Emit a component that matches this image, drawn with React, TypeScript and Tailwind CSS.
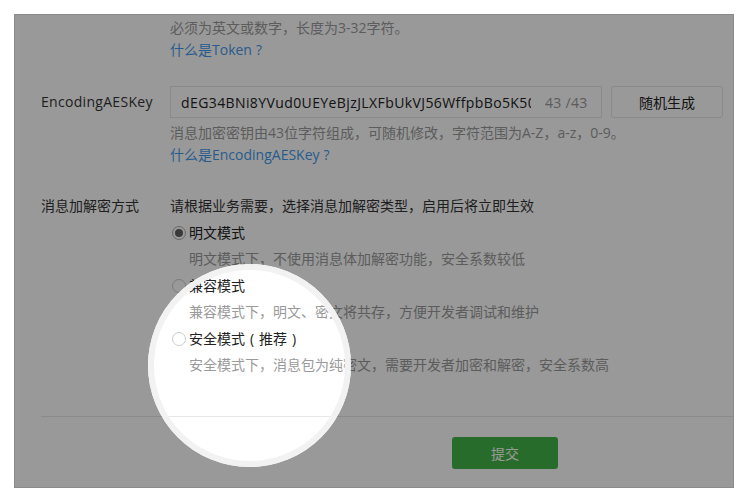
import React from 'react';

const FONT = "font-['Open_Sans','Noto_Sans_CJK_SC',sans-serif]";

// full-width punctuation drawn centered in an em box, like the reference face
function Fw({ ch }: { ch: string }) {
  return <span className="inline-block w-[14px] text-center">{ch}</span>;
}

function Radio({ checked, label, desc }: { checked?: boolean; label: React.ReactNode; desc: string }) {
  return (
    <div>
      <div className="flex items-center h-[26.5px]">
        <span
          className={
            'ml-[2px] w-[14px] h-[14px] rounded-full border flex items-center justify-center bg-white ' +
            (checked ? 'border-[#adadad]' : 'border-[#cdcdcd]')
          }
        >
          {checked && <span className="w-[8px] h-[8px] rounded-full bg-[#626262]" />}
        </span>
        <span className="ml-[3px] text-[#222]">{label}</span>
      </div>
      <div className="h-[26.5px] leading-[26.5px] pl-[19px] text-[#9a9a9a]">{desc}</div>
    </div>
  );
}

export default function App() {
  return (
    <div className={`bg-white w-[750px] h-[500px] pt-[14px] pl-[14px] text-[14px] ${FONT}`}>
      <div className="relative w-[720px] h-[474px] overflow-hidden">
        <div className="w-full h-full border border-[#e7e7e7] bg-white">
          {/* token hint */}
          <div className="pl-[155px] pt-[2px] leading-[22px]">
            <div className="text-[#9a9a9a]">必须为英文或数字，长度为3-32字符。</div>
            <div className="text-[#459ae9]">
              什么是Token<Fw ch="?" />
            </div>
          </div>

          {/* EncodingAESKey */}
          <div className="flex mt-[25px]">
            <div className="w-[155px] pl-[26px] leading-[32px] text-[#353535] tracking-[0.3px]">EncodingAESKey</div>
            <div>
              <div className="flex items-center">
                <div className="w-[432px] h-[32px] border border-[#e7e7e7] flex items-center pl-[10px]">
                  <span className="w-[350px] shrink-0 overflow-hidden whitespace-nowrap text-[#222] tracking-[0.4px]">
                    dEG34BNi8YVud0UEYeBjzJLXFbUkVJ56WffpbBo5K50
                  </span>
                  <span className="ml-[14px] text-[#9a9a9a] tracking-[0.3px] whitespace-nowrap">43 /43</span>
                </div>
                <button className="ml-[9px] w-[112px] h-[32px] border border-[#e7e7e7] rounded-[3px] bg-white text-[#222]">
                  随机生成
                </button>
              </div>
              <div className="mt-[4px] leading-[22px]">
                <div className="text-[#9a9a9a]">消息加密密钥由43位字符组成，可随机修改，字符范围为A-Z，a-z，0-9。</div>
                <div className="text-[#459ae9]">
                  什么是EncodingAESKey<Fw ch="?" />
                </div>
              </div>
            </div>
          </div>

          {/* mode */}
          <div className="flex mt-[26.75px]">
            <div className="w-[155px] pl-[26px] leading-[26.5px] text-[#353535]">消息加解密方式</div>
            <div>
              <div className="leading-[26.5px] text-[#353535]">请根据业务需要，选择消息加解密类型，启用后将立即生效</div>
              <Radio checked label="明文模式" desc="明文模式下，不使用消息体加解密功能，安全系数较低" />
              <Radio label="兼容模式" desc="兼容模式下，明文、密文将共存，方便开发者调试和维护" />
              <Radio
                label={
                  <>
                    安全模式<Fw ch="(" />推荐<Fw ch=")" />
                  </>
                }
                desc="安全模式下，消息包为纯密文，需要开发者加密和解密，安全系数高"
              />
            </div>
          </div>

          <div className="mt-[38px] ml-[26px] border-t border-[#e7e7e7]" />

          <div className="mt-[20px] pl-[437px]">
            <button className="w-[106px] h-[32px] rounded-[3px] bg-[#44b549] text-white">提交</button>
          </div>
        </div>

        {/* spotlight */}
        <div className="absolute left-[134px] top-[250px] w-[203px] h-[203px] rounded-full border-[6px] border-[#f2f2f2] shadow-[0_0_0_2000px_rgba(0,0,0,0.4)]" />
      </div>
    </div>
  );
}
